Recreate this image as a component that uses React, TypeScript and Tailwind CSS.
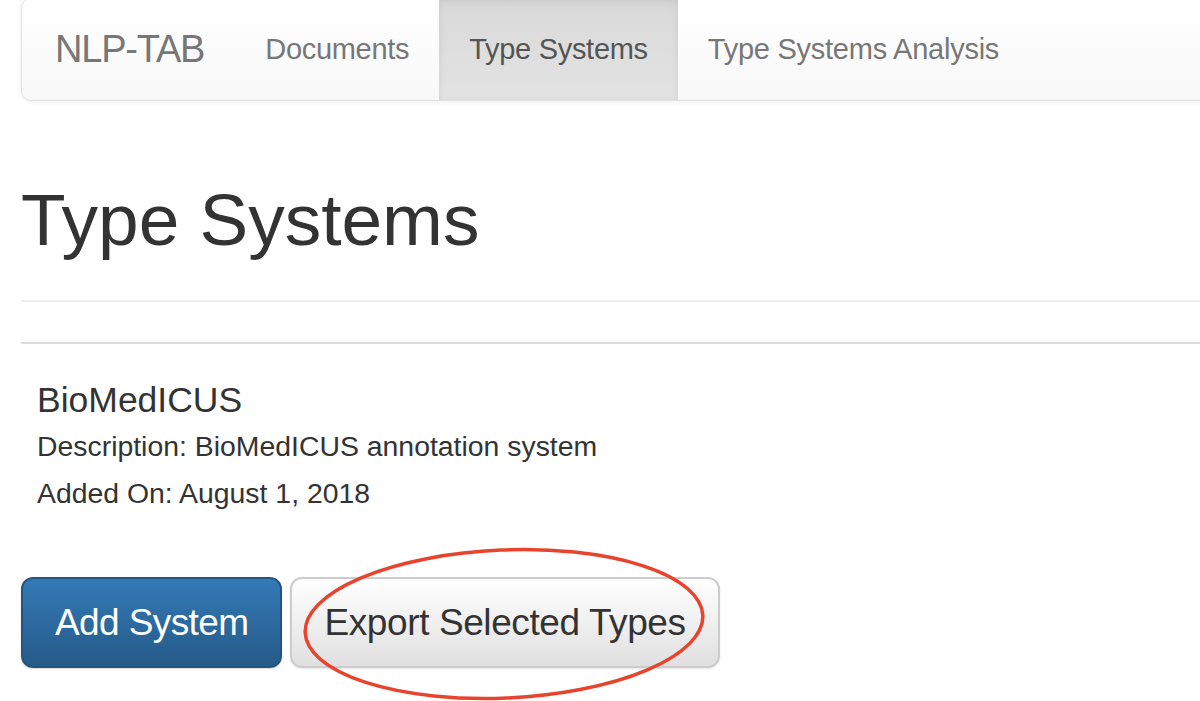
export default function App() {
  return (
    <div className="min-h-[701px] w-[1200px] overflow-hidden bg-white font-['Liberation_Sans',Arial,sans-serif] text-[#333]">
      <div className="pl-[21px]">
        {/* Navbar */}
        <nav className="-mr-[40px] -mt-[2px] flex h-[103px] items-stretch rounded-[10px] border border-[#e3e3e3] bg-gradient-to-b from-white to-[#f8f8f8] shadow-[0_1px_5px_rgba(0,0,0,0.08)]">
          <a className="flex items-center pl-[33px] pr-[31px] text-[38px] tracking-[-1.2px] text-[#777]">NLP-TAB</a>
          <a className="flex items-center pl-[30px] pr-[30px] text-[29px] tracking-[-0.3px] text-[#777]">Documents</a>
          <a className="flex items-center bg-gradient-to-b from-[#d9d9d9] to-[#e3e3e3] px-[30px] text-[29px] tracking-[-0.3px] text-[#555] shadow-[inset_0_3px_9px_rgba(0,0,0,0.08)]">
            Type Systems
          </a>
          <a className="flex items-center px-[30px] text-[29px] tracking-[-0.25px] text-[#777]">Type Systems Analysis</a>
        </nav>

        {/* Page header */}
        <h1 className="mt-[77px] text-[73px] leading-[84px] font-normal">Type Systems</h1>
        <hr className="-mr-[40px] mt-[38px] border-t-2 border-[#eee]" />

        {/* Type system list */}
        <div className="-mr-[40px] mt-[40px] border-t-2 border-[#ddd] pl-[16px]">
          <h3 className="mt-[36px] text-[35.5px] leading-[40px]">BioMedICUS</h3>
          <p className="mt-[3px] text-[28.4px] leading-[47px]">Description: BioMedICUS annotation system</p>
          <p className="text-[28.4px] leading-[47px]">Added On: August 1, 2018</p>
        </div>

        {/* Actions */}
        <div className="relative mt-[60px] flex gap-[8px]">
          <button className="h-[91px] rounded-[12px] border-2 border-[#245580] bg-gradient-to-b from-[#337ab7] to-[#265a88] px-[32px] text-[37px] tracking-[-0.6px] text-white shadow-[0_1px_2px_rgba(0,0,0,0.15)]">
            Add System
          </button>
          <button className="h-[91px] rounded-[12px] border-2 border-[#ccc] bg-gradient-to-b from-white to-[#e0e0e0] px-[32px] text-[37px] tracking-[-0.4px] text-[#333] shadow-[0_1px_2px_rgba(0,0,0,0.1)]">
            Export Selected Types
          </button>
          {/* annotation circle drawn over the export button */}
          <svg className="pointer-events-none absolute left-[262px] top-[-30px]" width="450" height="160" viewBox="0 0 450 160">
            <ellipse cx="221" cy="77" rx="199" ry="74" fill="none" stroke="#e8432d" strokeWidth="3.5" transform="rotate(-2.5 221 77)" />
          </svg>
        </div>
      </div>
    </div>
  )
}
